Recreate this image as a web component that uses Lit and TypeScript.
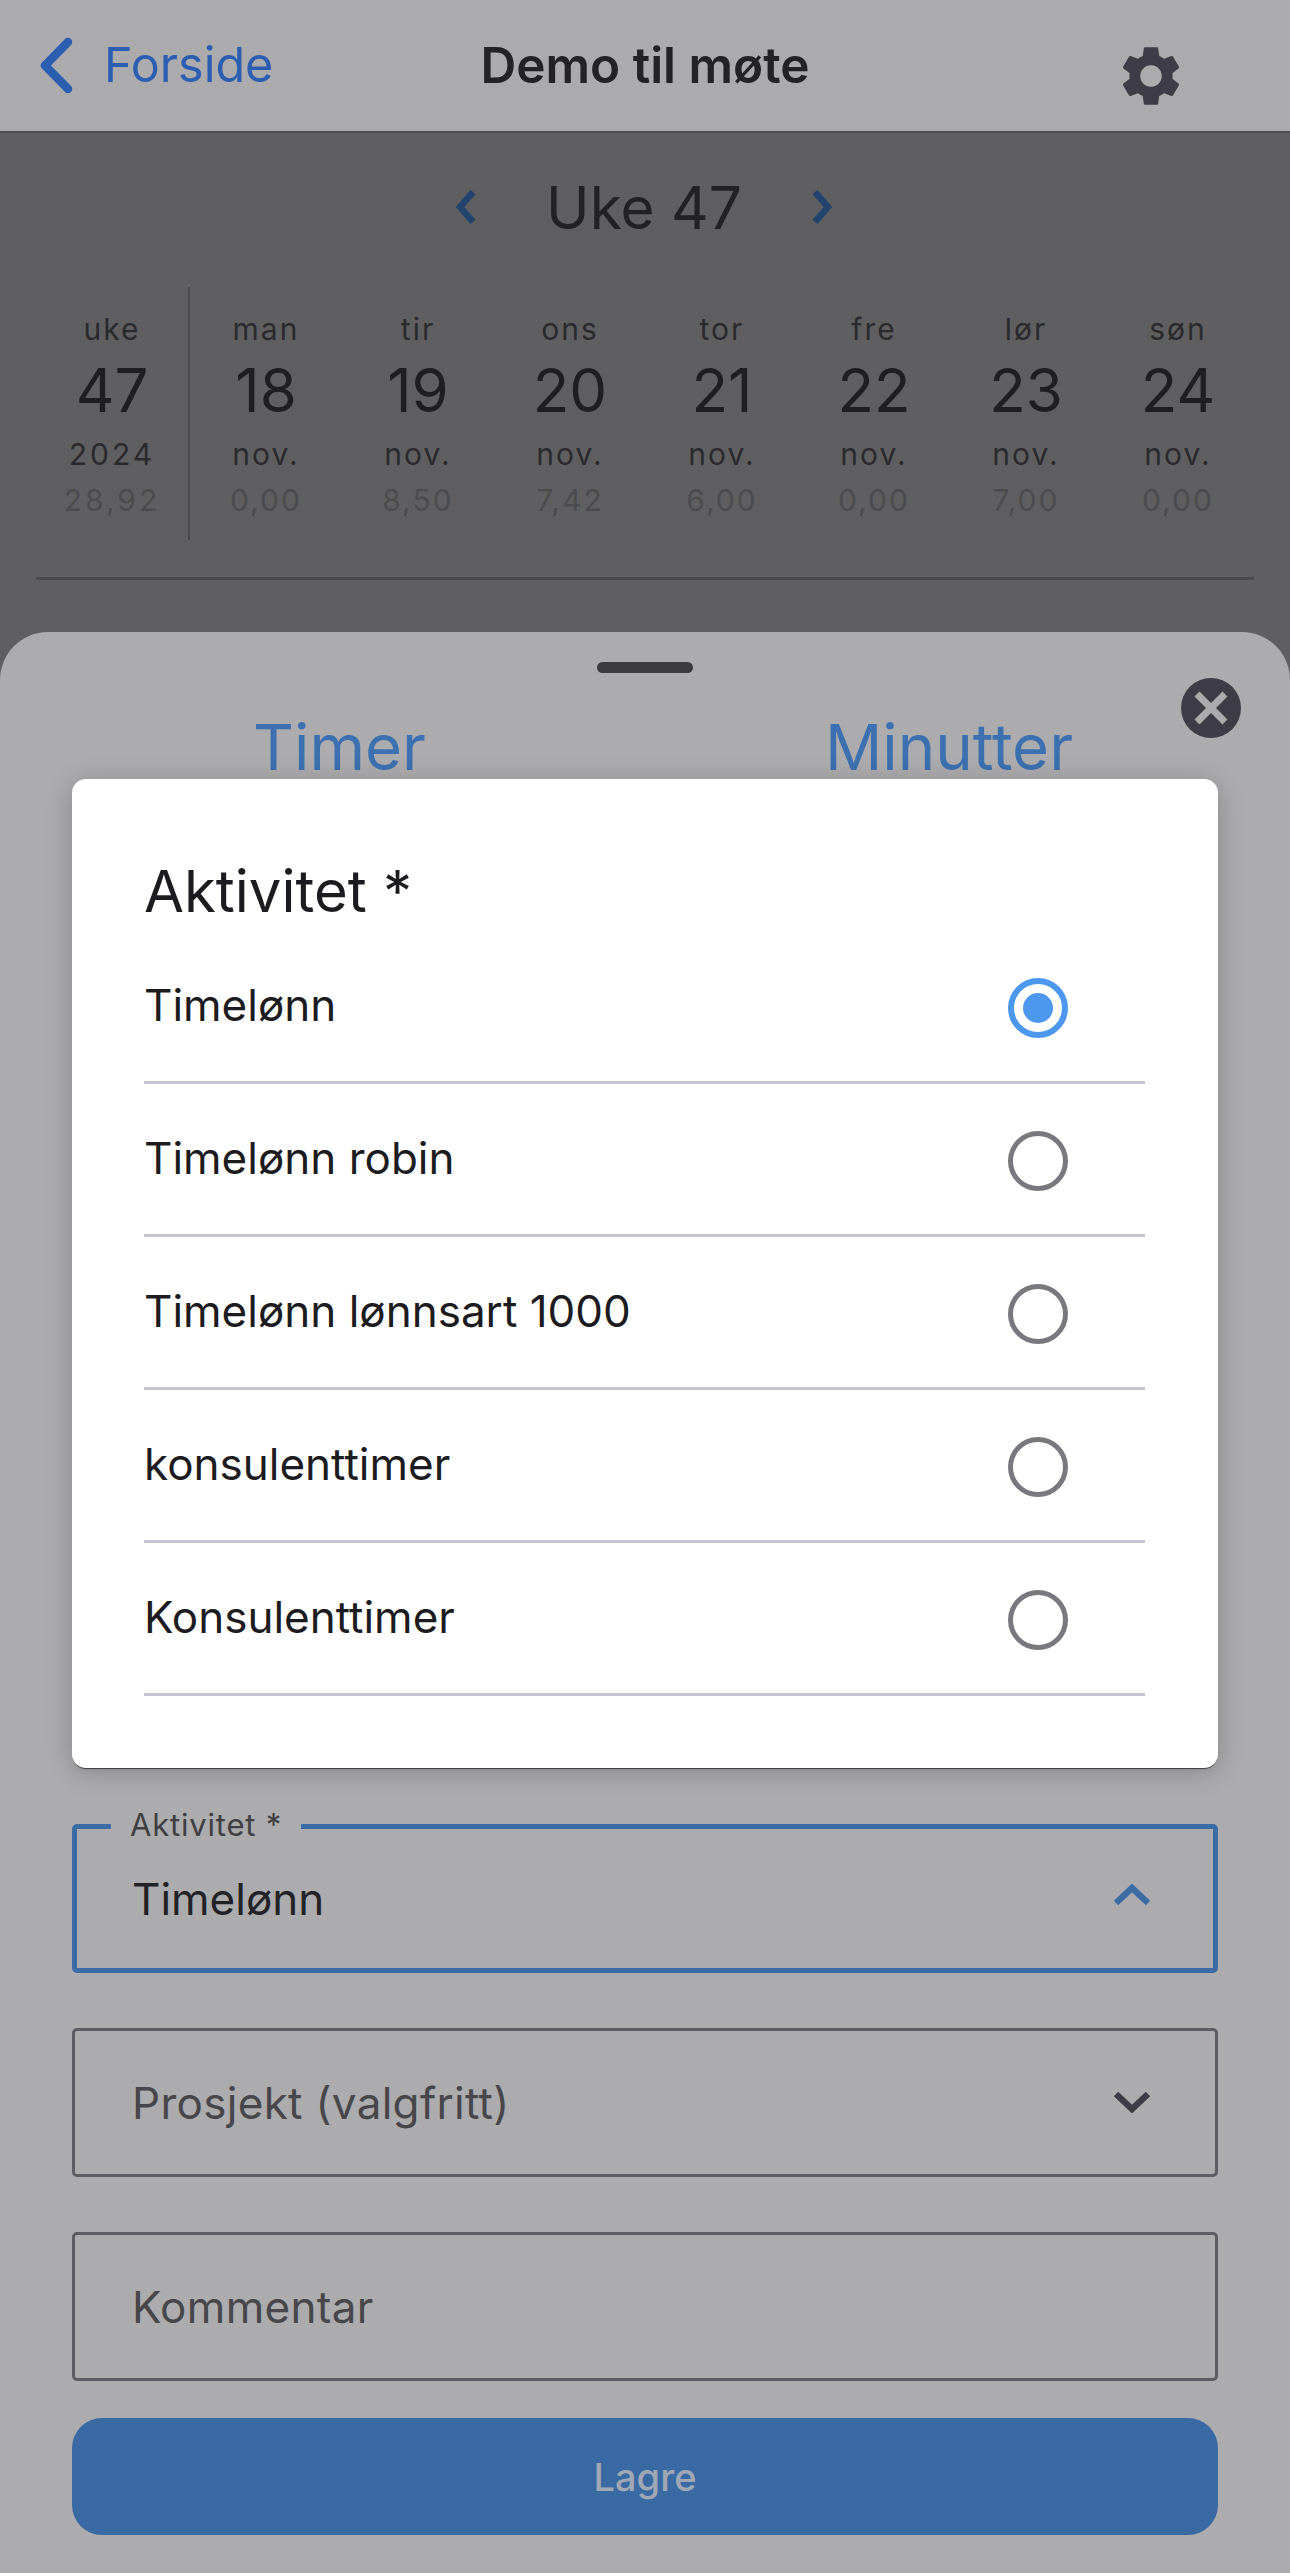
import { LitElement, html, css, svg } from "lit";
import { customElement } from "lit/decorators.js";

const DAYS = [
  ["man", "18", "0,00"],
  ["tir", "19", "8,50"],
  ["ons", "20", "7,42"],
  ["tor", "21", "6,00"],
  ["fre", "22", "0,00"],
  ["lør", "23", "7,00"],
  ["søn", "24", "0,00"],
];
const OPTIONS = ["Timelønn", "Timelønn robin", "Timelønn lønnsart 1000", "konsulenttimer", "Konsulenttimer"];

const chevron = (d: string, cls: string) => html`<svg class=${cls} viewBox="0 0 38 22" fill="none">${svg`<path d=${d} stroke="currentColor" stroke-width="6.5" stroke-linecap="butt" stroke-linejoin="miter"/>`}</svg>`;

@customElement("app-root")
export class AppRoot extends LitElement {
  static styles = css`
    :host {
      display: flex;
      flex-direction: column;
      width: 1290px;
      height: 2573px;
      overflow: hidden;
      background: #5f5f61;
      font-family: Inter, "Liberation Sans", sans-serif;
      color: #1f1f23;
    }
    .header {
      height: 131px;
      flex: none;
      background: #ababad;
      border-bottom: 2px solid #4f4f52;
      display: grid;
      grid-template-columns: 1fr auto 1fr;
      align-items: start;
    }
    .back {
      display: flex;
      align-items: center;
      gap: 31px;
      color: #2b5db0;
      font-size: 48.5px;
      line-height: 60px;
      padding: 35px 0 0 40px;
    }
    .back svg { width: 33px; height: 57px; flex: none; }
    .title {
      font-size: 49.5px;
      font-weight: 600;
      line-height: 60px;
      padding-top: 35px;
      color: #232327;
    }
    .gear {
      justify-self: end;
      margin: 40px 103px 0 0;
      width: 72px;
      height: 72px;
      color: #3e3c46;
    }
    .weekbar {
      display: flex;
      justify-content: center;
      align-items: center;
      gap: 69px;
      height: 88px;
      margin: 30px 2px 0 0;
      font-size: 58.5px;
      color: #222226;
      flex: none;
    }
    .weekbar svg { width: 24px; height: 36px; color: #23436f; }
    .grid {
      display: flex;
      margin: 36px 36px 0;
      height: 253px;
      flex: none;
    }
    .col {
      display: flex;
      flex-direction: column;
      align-items: center;
      width: 152px;
      padding-top: 23px;
      font-size: 30px;
      letter-spacing: 2px;
      color: #2a2a2e;
    }
    .col.wk {
      width: 154px;
      border-right: 2px solid #4a4a4d;
      letter-spacing: 3px;
    }
    .days { display: flex; }
    .col .lbl { line-height: 38px; }
    .col.wk .lbl { letter-spacing: 2px; }
    .col .num { font-size: 60px; line-height: 60px; margin-top: 12px; letter-spacing: 0; color: #1f1f23; }
    .col .sub { line-height: 38px; margin-top: 15px; }
    .col .val { line-height: 38px; margin-top: 8px; color: #4c4c4f; }
    .rule { height: 3px; background: #4a4a4d; margin: 37px 36px 0; flex: none; }
    .sheet {
      position: relative;
      flex: 1;
      margin-top: 52px;
      background: #acacae;
      border-radius: 48px 48px 0 0;
      display: flex;
      flex-direction: column;
      padding: 0 72px 38px;
    }
    .handle {
      align-self: center;
      width: 96px;
      height: 11px;
      border-radius: 6px;
      background: #3b3a3e;
      margin-top: 30px;
      flex: none;
    }
    .close {
      position: absolute;
      left: 1181px;
      top: 46px;
      width: 60px;
      height: 60px;
    }
    .tabs {
      display: grid;
      grid-template-columns: 679px 540px;
      margin: 35px 0 0 -72px;
      font-size: 63.5px;
      line-height: 78px;
      color: #3c70b0;
      text-align: center;
    }
    .dialog {
      position: absolute;
      left: 72px;
      top: 147px;
      width: 1146px;
      height: 989px;
      box-sizing: border-box;
      background: #fff;
      border-radius: 14px;
      padding: 76px 73px 0 72px;
      box-shadow: 0 2px 1px -1px #3c3c3e, 0 4px 26px rgba(0, 0, 0, 0.22);
    }
    .dialog h2 {
      margin: 0 0 4px;
      font-size: 58px;
      line-height: 72px;
      font-weight: 400;
      color: #1c1c20;
    }
    .opt {
      display: flex;
      align-items: center;
      justify-content: space-between;
      height: 153px;
      box-sizing: border-box;
      border-bottom: 3px solid #c8c3d0;
      font-size: 44px;
      color: #1c1c20;
      padding: 0 77px 0 0;
    }
    .opt span { position: relative; top: -1px; }
    .radio {
      position: relative;
      top: 2px;
      width: 60px;
      height: 60px;
      box-sizing: border-box;
      border: 5px solid #79787f;
      border-radius: 50%;
      display: flex;
      align-items: center;
      justify-content: center;
    }
    .radio.on { border: 6px solid #4c98ee; }
    .radio.on i { display: block; width: 30px; height: 30px; border-radius: 50%; background: #4c98ee; }
    .fields { margin-top: auto; display: flex; flex-direction: column; }
    .field {
      position: relative;
      height: 149px;
      box-sizing: border-box;
      border: 3px solid #5d5c63;
      border-radius: 5px;
      display: flex;
      align-items: center;
      justify-content: space-between;
      padding: 0 64px 0 57px;
      font-size: 44px;
      letter-spacing: 0.3px;
      color: #47464b;
      margin-bottom: 55px;
    }
    .field:nth-child(3) { margin-bottom: 37px; }
    .field.focus { border: 5px solid #3c6ca6; color: #232327; padding-left: 55px; padding-right: 62px; letter-spacing: 0; }
    .legend {
      position: absolute;
      left: 34px;
      top: -22px;
      padding: 0 19px;
      background: #acacae;
      font-size: 31px;
      line-height: 36px;
      letter-spacing: 0.8px;
      color: #3f3f43;
    }
    .chev { width: 38px; height: 22px; color: #3e3c46; flex: none; position: relative; top: -1px; }
    .chev.up { color: #3c6ca6; top: -4px; }
    .save {
      height: 117px;
      border-radius: 30px;
      background: #3a6aa3;
      display: flex;
      align-items: center;
      justify-content: center;
      font-size: 38px;
      font-weight: 500;
      color: #a0a8b5;
      flex: none;
    }
  `;

  render() {
    return html`
      <div class="header">
        <div class="back">
          <svg viewBox="0 0 33 57" fill="none"><path d="M28 5 5 28.5 28 52" stroke="currentColor" stroke-width="8.5" stroke-linecap="round" stroke-linejoin="round"/></svg>
          <span>Forside</span>
        </div>
        <div class="title">Demo til møte</div>
        <svg class="gear" viewBox="0 0 24 24" fill="currentColor"><path fill-rule="evenodd" d="M19.14 12.94c.04-.3.06-.61.06-.94 0-.32-.02-.64-.07-.94l2.03-1.58c.18-.14.23-.41.12-.61l-1.92-3.32c-.12-.22-.37-.29-.59-.22l-2.39.96c-.5-.38-1.03-.7-1.62-.94l-.36-2.54c-.04-.24-.24-.41-.48-.41h-3.84c-.24 0-.43.17-.47.41l-.36 2.54c-.59.24-1.13.57-1.62.94l-2.39-.96c-.22-.08-.47 0-.59.22L2.74 8.87c-.12.21-.08.47.12.61l2.03 1.58c-.05.3-.09.63-.09.94s.02.64.07.94l-2.03 1.58c-.18.14-.23.41-.12.61l1.92 3.32c.12.22.37.29.59.22l2.39-.96c.5.38 1.03.7 1.62.94l.36 2.54c.05.24.24.41.48.41h3.84c.24 0 .44-.17.47-.41l.36-2.54c.59-.24 1.13-.56 1.62-.94l2.39.96c.22.08.47 0 .59-.22l1.92-3.32c.12-.22.07-.47-.12-.61l-2.01-1.58zM12 15.6c-1.98 0-3.6-1.62-3.6-3.6s1.62-3.6 3.6-3.6 3.6 1.62 3.6 3.6-1.62 3.6-3.6 3.6z"/></svg>
      </div>
      <div class="weekbar">
        <svg viewBox="0 0 24 36" fill="none"><path d="M20 3 7 18l13 15" stroke="currentColor" stroke-width="6.5"/></svg>
        <span>Uke 47</span>
        <svg viewBox="0 0 24 36" fill="none"><path d="M4 3l13 15L4 33" stroke="currentColor" stroke-width="6.5"/></svg>
      </div>
      <div class="grid">
        <div class="col wk">
          <span class="lbl">uke</span><span class="num">47</span><span class="sub">2024</span><span class="val">28,92</span>
        </div>
        <div class="days">
          ${DAYS.map(
            ([d, n, v]) => html`<div class="col">
              <span class="lbl">${d}</span><span class="num">${n}</span><span class="sub">nov.</span><span class="val">${v}</span>
            </div>`
          )}
        </div>
      </div>
      <div class="rule"></div>
      <div class="sheet">
        <div class="handle"></div>
        <svg class="close" viewBox="0 0 60 60"><circle cx="30" cy="30" r="30" fill="#3e3c46"/><path d="M16 16l28 28M44 16 16 44" stroke="#ababad" stroke-width="7"/></svg>
        <div class="tabs"><span>Timer</span><span>Minutter</span></div>
        <div class="dialog">
          <h2>Aktivitet *</h2>
          ${OPTIONS.map(
            (o, i) => html`<div class="opt">
              <span>${o}</span>
              <div class="radio ${i === 0 ? "on" : ""}"><i></i></div>
            </div>`
          )}
        </div>
        <div class="fields">
          <div class="field focus">
            <div class="legend">Aktivitet *</div>
            <span>Timelønn</span>
            ${chevron("M3 19 19 4l16 15", "chev up")}
          </div>
          <div class="field">
            <span>Prosjekt (valgfritt)</span>
            ${chevron("M3 3l16 15L35 3", "chev")}
          </div>
          <div class="field"><span>Kommentar</span></div>
          <div class="save">Lagre</div>
        </div>
      </div>
    `;
  }
}
